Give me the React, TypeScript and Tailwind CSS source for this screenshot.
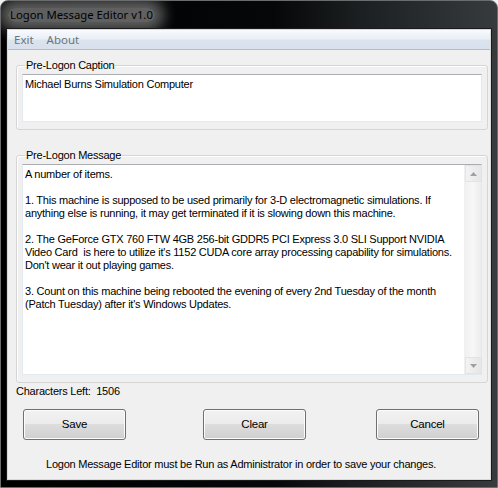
import React, { FC } from "react";

const messageLines = [
  "A number of items.",
  "",
  "1. This machine is supposed to be used primarily for 3-D electromagnetic simulations. If",
  "anything else is running, it may get terminated if it is slowing down this machine.",
  "",
  "2. The GeForce GTX 760 FTW 4GB 256-bit GDDR5 PCI Express 3.0 SLI Support NVIDIA",
  "Video Card  is here to utilize it's 1152 CUDA core array processing capability for simulations.",
  "Don't wear it out playing games.",
  "",
  "3. Count on this machine being rebooted the evening of every 2nd Tuesday of the month",
  "(Patch Tuesday) after it's Windows Updates.",
];

const WinButton: FC<{ label: string; className?: string }> = ({ label, className }) => (
  <button
    type="button"
    className={`h-[31px] w-[103px] rounded-[3px] border border-[#707070] bg-[linear-gradient(#f2f2f2_0%,#ebebeb_50%,#dddddd_50%,#cfcfcf_100%)] shadow-[inset_0_0_0_1px_#fcfcfc] text-[11.5px] text-black ${className ?? ""}`}
  >
    {label}
  </button>
);

const Arrow: FC<{ down?: boolean }> = ({ down }) => (
  <div className="h-[17px] w-[17px] flex items-center justify-center border border-[#e3e3e3] bg-[linear-gradient(to_right,#f3f3f3,#e6e6e6)]">
    <svg width="7" height="4" viewBox="0 0 7 4">
      {down ? (
        <path d="M0 0h7L3.5 4z" fill="#a0a0a0" />
      ) : (
        <path d="M0 4h7L3.5 0z" fill="#a0a0a0" />
      )}
    </svg>
  </div>
);

const App: FC = () => {
  return (
    <div className="w-[498px] h-[488px] bg-[#f0f0f0]">
      <div className="w-[498px] h-[488px] flex flex-col rounded-t-[8px] border border-[#6a6c6e] bg-[linear-gradient(to_right,#000000_0%,#050708_55%,#1c1f21_72%,#383b3e_100%)] overflow-hidden">
        {/* title bar */}
        <div className="h-[28px] shrink-0 flex items-center pl-[7px]">
          <span className="px-[2px] rounded-[10px] bg-[rgba(210,210,210,0.45)] shadow-[0_0_14px_9px_rgba(210,210,210,0.45)] text-[11.3px] leading-[14px] text-black [font-family:'Noto_Sans','Open_Sans',sans-serif]">
            Logon Message Editor v1.0
          </span>
        </div>

        {/* client area */}
        <div className="mx-[6px] mb-[7px] flex-1 min-h-0 flex flex-col border border-[#d8d8d8] outline outline-[#1a1a1a] bg-[#f0f0f0] [font-family:'Liberation_Sans',Arial,sans-serif] text-[11px] tracking-[-0.23px] text-black">
          {/* menu */}
          <div className="h-[20px] shrink-0 flex items-center gap-[13px] pl-[6px] border-b border-[#b6bcc6] bg-[linear-gradient(#f8fafd_0%,#eaf0f7_45%,#dbe4ee_55%,#d7e0eb_100%)] text-[11.5px] tracking-normal text-[#6d737a] [font-family:'Noto_Sans','Open_Sans',sans-serif]">
            <span>Exit</span>
            <span>About</span>
          </div>

          {/* caption group */}
          <fieldset className="mt-[9px] ml-[8px] mr-[2px] min-w-0 h-[71px] rounded-[3px] border border-[#d5d5d5] shadow-[inset_1px_1px_0_#fff] px-[5px] pb-[6px]">
            <legend className="ml-[3px] px-[1px] leading-[13px]">Pre-Logon Caption</legend>
            <div className="mt-[2px] h-[48px] border border-[#e3e9ef] border-t-[#abadb3] bg-white px-[2px] pt-[3px] leading-[13px]">
              Michael Burns Simulation Computer
            </div>
          </fieldset>

          {/* message group */}
          <fieldset className="mt-[19px] ml-[8px] mr-[2px] min-w-0 h-[234px] rounded-[3px] border border-[#d5d5d5] shadow-[inset_1px_1px_0_#fff] px-[5px]">
            <legend className="ml-[3px] px-[1px] leading-[13px]">Pre-Logon Message</legend>
            <div className="mt-[2px] h-[211px] flex border border-[#e3e9ef] border-t-[#abadb3] bg-white">
              <div className="flex-1 min-w-0 overflow-hidden px-[2px] pt-[3px] leading-[13px]">
                {messageLines.map((line, i) => (
                  <div key={i} className="h-[13px] whitespace-pre">
                    {line}
                  </div>
                ))}
              </div>
              <div className="w-[17px] shrink-0 flex flex-col bg-[linear-gradient(to_right,#f0f0f0,#f7f7f7,#ececec)] border-l border-[#f0f0f0]">
                <Arrow />
                <div className="flex-1" />
                <Arrow down />
              </div>
            </div>
          </fieldset>

          <div className="mt-[1px] ml-[8px] h-[14px] leading-[14px]">Characters Left:&nbsp;&nbsp;1506</div>

          <div className="mt-[11px] flex">
            <WinButton label="Save" className="ml-[15px]" />
            <WinButton label="Clear" className="ml-[77px]" />
            <WinButton label="Cancel" className="ml-[70px]" />
          </div>

          <div className="mt-[17px] pl-[38px] text-[11px] leading-[14px] whitespace-nowrap">
            Logon Message Editor must be Run as Administrator in order to save your changes.
          </div>
        </div>
      </div>
    </div>
  );
};

export default App;
